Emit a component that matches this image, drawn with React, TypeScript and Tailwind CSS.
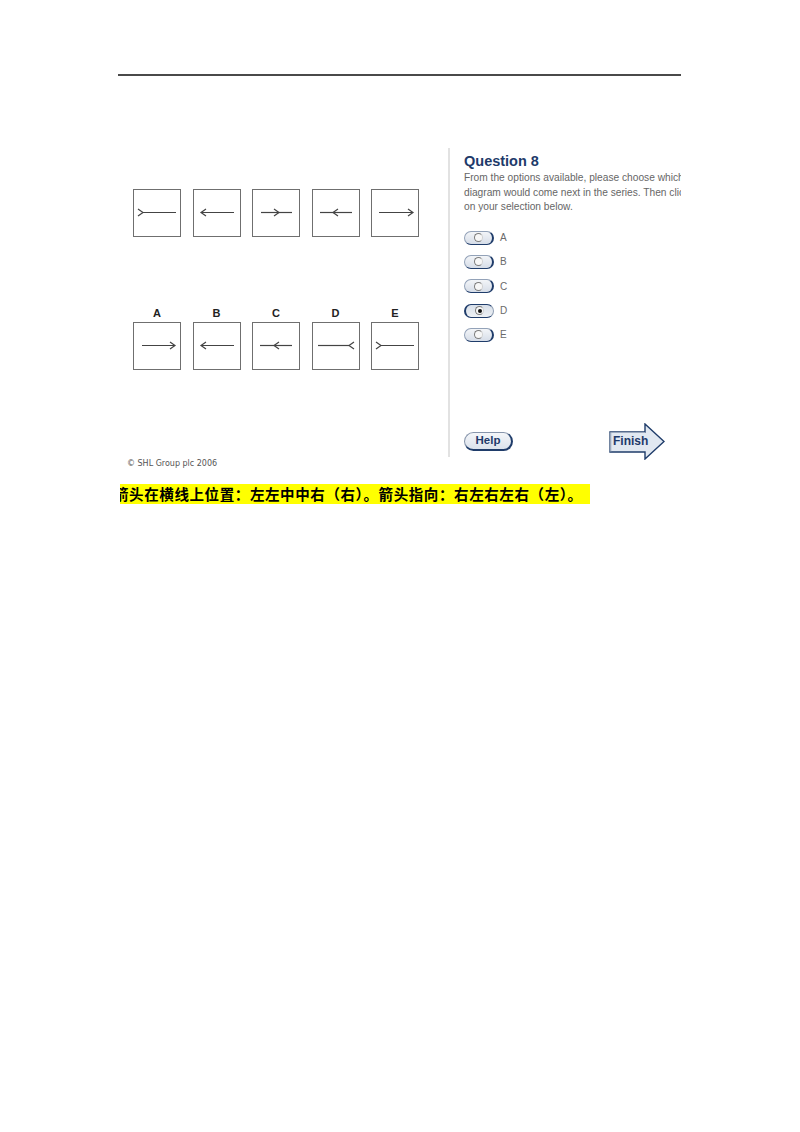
import React from "react"

type Arrow = { x1: number; x2: number; tip: number; dir: "l" | "r" }

const topRow: Arrow[] = [
  { x1: 9, x2: 42, tip: 9, dir: "r" },
  { x1: 7, x2: 40, tip: 7, dir: "l" },
  { x1: 8, x2: 39, tip: 26, dir: "r" },
  { x1: 7, x2: 39, tip: 20, dir: "l" },
  { x1: 7, x2: 41, tip: 41, dir: "r" },
]

const answers: { label: string; arrow: Arrow }[] = [
  { label: "A", arrow: { x1: 8, x2: 41, tip: 41, dir: "r" } },
  { label: "B", arrow: { x1: 7, x2: 40, tip: 7, dir: "l" } },
  { label: "C", arrow: { x1: 7, x2: 39, tip: 21, dir: "l" } },
  { label: "D", arrow: { x1: 5, x2: 36, tip: 36, dir: "l" } },
  { label: "E", arrow: { x1: 9, x2: 42, tip: 9, dir: "r" } },
]

const options = ["A", "B", "C", "D", "E"]

const ArrowBox = ({ arrow }: { arrow: Arrow }) => {
  const back = arrow.dir === "r" ? arrow.tip - 5 : arrow.tip + 5
  return (
    <div className="w-[48px] h-[48px] border-[1.5px] border-[#6f6f6f] bg-white">
      <svg width="45" height="45" viewBox="0 0 45 45" className="block">
        <line x1={arrow.x1} y1="22.5" x2={arrow.x2} y2="22.5" stroke="#444" strokeWidth="1.2" />
        <polyline
          points={`${back},19 ${arrow.tip},22.5 ${back},26`}
          fill="none"
          stroke="#444"
          strokeWidth="1.2"
        />
      </svg>
    </div>
  )
}

const RadioPill = ({ selected }: { selected: boolean }) => (
  <div
    className={
      selected
        ? "w-[30px] h-[14px] rounded-full border-[1.5px] border-[#1f3c6a] border-l-[2.5px] border-r-[#8e9db3] bg-gradient-to-b from-[#d8dfe9] to-[#eef1f5] flex items-center justify-center"
        : "w-[30px] h-[14px] rounded-full border border-[#93a2b8] border-r-[2.5px] border-r-[#1f3c6a] border-b-[1.5px] border-b-[#1f3c6a] bg-gradient-to-b from-[#f3f5f8] to-[#d6dde8] flex items-center justify-center"
    }
  >
    <div className="w-[9px] h-[9px] rounded-full border border-[#7d7d7d] border-r-[#d0d0d0] bg-[#f7f7f7] flex items-center justify-center">
      {selected && <div className="w-[4px] h-[4px] rounded-full bg-[#111]" />}
    </div>
  </div>
)

export default function App() {
  return (
    <div className="w-[800px] h-[1132px] bg-white font-['Liberation_Sans',Arial,sans-serif]">
      <div className="ml-[118px] w-[563px] pt-[74px]">
        <div className="h-[2px] bg-[#4a4a4a]" />

        <div className="flex h-[309px] mt-[72px]">
          {/* figures */}
          <div className="w-[330px] pl-[15px]">
            <div className="flex gap-[11.5px] mt-[41px]">
              {topRow.map((a, i) => (
                <ArrowBox key={i} arrow={a} />
              ))}
            </div>
            <div className="flex gap-[11.5px] mt-[70px]">
              {answers.map((a) => (
                <div key={a.label} className="flex flex-col items-center">
                  <div className="h-[12px] leading-[12px] text-[11px] font-bold text-[#222] mb-[3px]">{a.label}</div>
                  <ArrowBox arrow={a.arrow} />
                </div>
              ))}
            </div>
          </div>

          <div className="w-[2px] h-[309px] bg-[#e2e2e2]" />

          {/* question panel */}
          <div className="w-[231px] pl-[14px] overflow-x-clip">
            <h2 className="pt-[5px] text-[14.5px] leading-[17px] font-bold text-[#1e3a6a] whitespace-nowrap">Question 8</h2>
            <p className="mt-[1px] text-[10.2px] leading-[14.5px] text-[#666] whitespace-nowrap">
              From the options available, please choose which
              <br />
              diagram would come next in the series. Then click
              <br />
              on your selection below.
            </p>
            <div className="mt-[11px] flex flex-col">
              {options.map((o) => (
                <div key={o} className="h-[24.3px] flex items-center gap-[6px]">
                  <RadioPill selected={o === "D"} />
                  <span className="text-[10px] text-[#6a6a6a]">{o}</span>
                </div>
              ))}
            </div>
            <div className="flex items-center mt-[76px]">
              <div className="w-[49px] h-[19px] rounded-full border border-[#8795ab] border-r-[2.5px] border-r-[#1f3c6a] border-b-[2px] border-b-[#1f3c6a] bg-gradient-to-b from-[#f4f6f9] to-[#dbe2ec] flex items-center justify-center">
                <span className="text-[11.5px] font-bold text-[#1e3a6a] leading-none">Help</span>
              </div>
              <div className="relative ml-[96px] w-[56px] h-[37px]">
                <svg width="56" height="37" viewBox="0 0 56 37" className="block">
                  <polygon
                    points="1,9 36,9 36,1 55,18.5 36,36 36,29 1,29"
                    fill="#e1e8f1"
                    stroke="#1f3c6a"
                    strokeWidth="1.4"
                    strokeLinejoin="miter"
                  />
                  <line x1="1.5" y1="9.5" x2="1.5" y2="28.5" stroke="#9aa8bd" strokeWidth="1.6" />
                  <line x1="1.5" y1="9.5" x2="36" y2="9.5" stroke="#9aa8bd" strokeWidth="1.2" />
                </svg>
                <span className="absolute left-[4px] top-[11px] text-[12px] leading-[14px] font-bold text-[#1e3a6a]">Finish</span>
              </div>
            </div>
          </div>
        </div>

        <div className="mt-[2px] ml-[9px] text-[8px] leading-[10px] text-[#555] font-['DejaVu_Sans',sans-serif]">© SHL Group plc 2006</div>

        <div className="mt-[15px] ml-[2px] w-[470px] h-[20px] bg-[#ffff00] overflow-hidden">
          <div className="-ml-[6px] whitespace-nowrap text-[14.5px] leading-[20px] tracking-[0.6px] font-bold text-black font-['Noto_Sans_CJK_SC','Noto_Sans',sans-serif]">
            箭头在横线上位置：左左中中右（右）。箭头指向：右左右左右（左）。
          </div>
        </div>
      </div>
    </div>
  )
}
